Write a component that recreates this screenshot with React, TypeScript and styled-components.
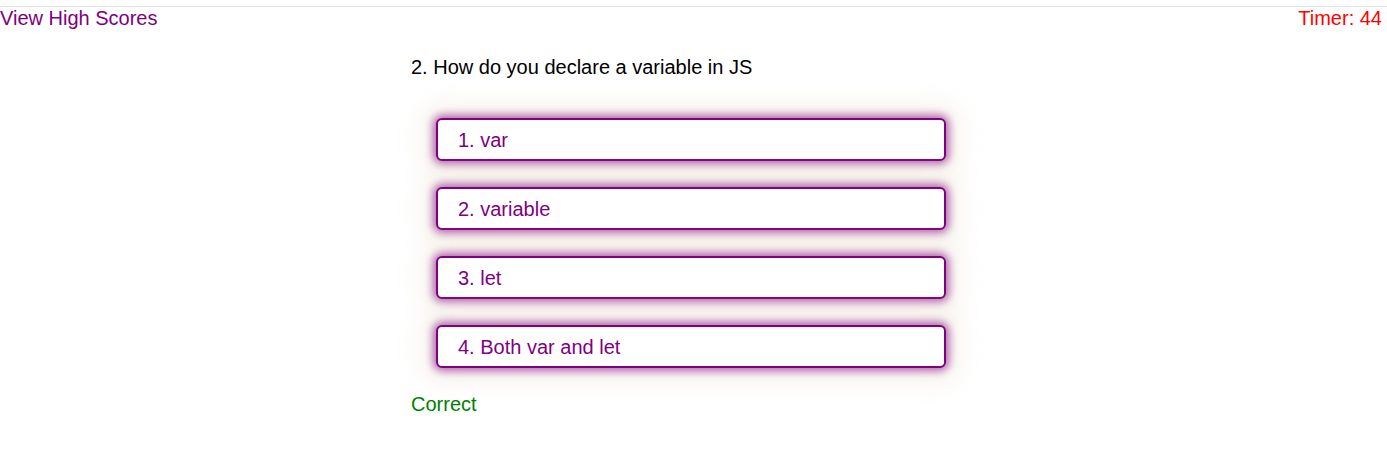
import React from "react";
import styled, { createGlobalStyle } from "styled-components";

const GlobalStyle = createGlobalStyle`
  body {
    margin: 0;
    background: #ffffff;
    font-family: "Liberation Sans", Arial, sans-serif;
    font-size: 20px;
  }
`;

const Header = styled.header`
  display: flex;
  justify-content: space-between;
  margin-top: 6px;
  border-top: 1px solid #e3e3e3;
  line-height: 23px;
  padding-right: 5px;
`;

const HighScores = styled.a`
  color: #800080;
  text-decoration: none;
  cursor: pointer;
`;

const Timer = styled.span`
  color: #ff0000;
`;

const Quiz = styled.main`
  max-width: 565px;
  margin: 0 auto;
`;

const Question = styled.p`
  margin: 26px 0 39px 0;
  line-height: 23px;
  color: #000000;
`;

const Choices = styled.div`
  display: flex;
  flex-direction: column;
  gap: 26px;
  padding-left: 25px;
`;

const Choice = styled.button`
  width: 510px;
  box-sizing: border-box;
  text-align: left;
  font-family: inherit;
  font-size: 20px;
  line-height: 23px;
  padding: 9px 20px 7px 20px;
  color: #800080;
  background: #ffffff;
  border: 2px solid #800080;
  border-radius: 6px;
  box-shadow: 0 0 8px 3px rgba(128, 0, 128, 0.6),
    0 0 24px 12px rgba(225, 210, 185, 0.3);
  cursor: pointer;
`;

const Result = styled.p<{ correct?: boolean }>`
  margin: 25px 0 0 0;
  line-height: 23px;
  color: ${({ correct }) => (correct ? "#008000" : "#ff0000")};
`;

const answers = ["1. var", "2. variable", "3. let", "4. Both var and let"];

const App: React.FC = () => {
  return (
    <>
      <GlobalStyle />
      <Header>
        <HighScores>View High Scores</HighScores>
        <Timer>Timer: 44</Timer>
      </Header>
      <Quiz>
        <Question>2. How do you declare a variable in JS</Question>
        <Choices>
          {answers.map((a) => (
            <Choice key={a}>{a}</Choice>
          ))}
        </Choices>
        <Result correct>Correct</Result>
      </Quiz>
    </>
  );
};

export default App;
